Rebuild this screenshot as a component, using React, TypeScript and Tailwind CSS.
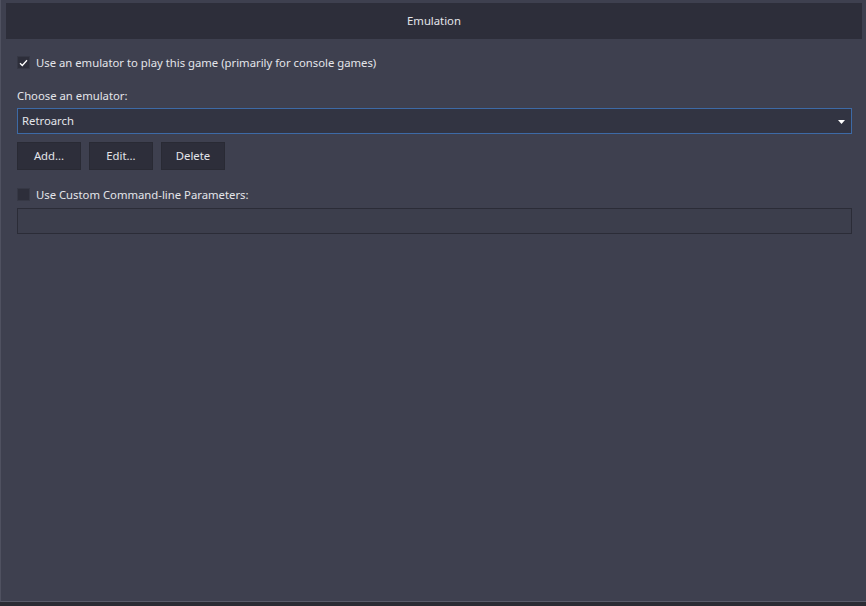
import React, { useState } from 'react';

const font = { fontFamily: '"Segoe UI", "Noto Sans", "Open Sans", sans-serif' };

const Checkbox: React.FC<{ checked: boolean; onChange: () => void; label: string }> = ({
  checked,
  onChange,
  label,
}) => (
  <label className="flex items-center gap-[6px] cursor-pointer select-none" onClick={onChange}>
    <span className="flex h-[13px] w-[13px] items-center justify-center bg-[#2d2e3a] border border-[#363845]">
      {checked && (
        <svg width="9" height="8" viewBox="0 0 9 8" fill="none">
          <path d="M1 4.2 L3.3 6.5 L8 1.2" stroke="#ffffff" strokeWidth="1.3" />
        </svg>
      )}
    </span>
    <span className="text-[11.3px] leading-none text-[#e4e5ea]">{label}</span>
  </label>
);

export default function App() {
  const [useEmu, setUseEmu] = useState(true);
  const [useCustom, setUseCustom] = useState(false);

  const buttons = ['Add...', 'Edit...', 'Delete'];

  return (
    <div className="h-[606px] w-[866px] bg-[#2a2b33]" style={font}>
      <div className="flex h-[602px] w-[866px] flex-col bg-[#3e404f] border-l border-b border-l-[#4f5160] border-b-[#585a68] pl-[5px] pr-[4px] pt-[3px]">
        <div className="flex h-[36px] items-center justify-center bg-[#2d2e3a] pt-[1px] text-[11.3px] text-[#e4e5ea]">
          Emulation
        </div>

        <div className="flex flex-col pl-[11px] pr-[10px]">
          <div className="mt-[17px]">
            <Checkbox
              checked={useEmu}
              onChange={() => setUseEmu(!useEmu)}
              label="Use an emulator to play this game (primarily for console games)"
            />
          </div>

          <div className="mt-[21px] text-[11.3px] leading-none text-[#e4e5ea]">Choose an emulator:</div>

          <div className="mt-[7px] flex h-[26px] items-center justify-between bg-[#323442] border border-[#3d6aa6] pl-[4px] pr-[6px] pt-[1px] text-[11.3px] text-[#e4e5ea]">
            <span>Retroarch</span>
            <svg width="7" height="4" viewBox="0 0 7 4">
              <path d="M0 0 H7 L3.5 4 Z" fill="#ffffff" />
            </svg>
          </div>

          <div className="mt-[8px] flex gap-[8px]">
            {buttons.map((b) => (
              <button
                key={b}
                className="h-[28px] w-[64px] bg-[#2d2e3a] border border-[#292a34] pt-[1px] text-[11.3px] text-[#e4e5ea] hover:bg-[#353745]"
              >
                {b}
              </button>
            ))}
          </div>

          <div className="mt-[18px]">
            <Checkbox
              checked={useCustom}
              onChange={() => setUseCustom(!useCustom)}
              label="Use Custom Command-line Parameters:"
            />
          </div>

          <input
            className="mt-[7px] h-[26px] w-full bg-[#3c3e4c] border border-[#2b2c37] px-[4px] text-[11.3px] text-[#e4e5ea] outline-none"
          />
        </div>
      </div>
    </div>
  );
}
